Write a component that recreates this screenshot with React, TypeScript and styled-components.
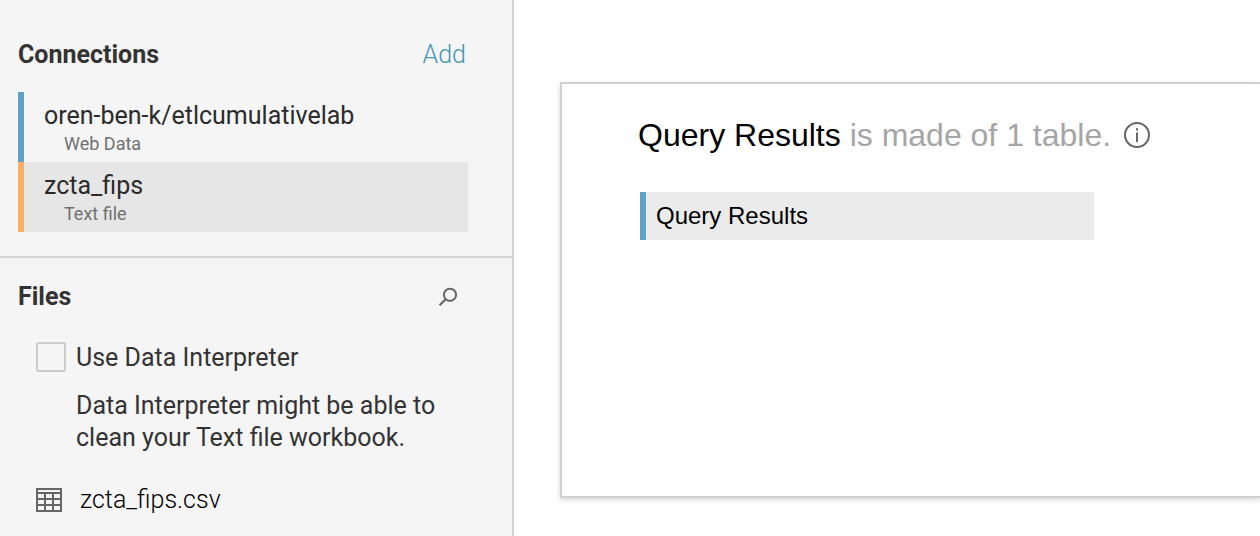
import React from "react";
import styled, { createGlobalStyle } from "styled-components";

const GlobalStyle = createGlobalStyle`
  *, *::before, *::after { box-sizing: border-box; }
  body {
    margin: 0;
    background: #fff;
    color: #333;
    font-family: Roboto, "Liberation Sans", sans-serif;
    font-size: 25px;
    font-weight: 400;
    line-height: 32px;
  }
  h1, h2, p, ul { margin: 0; padding: 0; }
  button, input { font: inherit; }
`;

const Page = styled.div`
  display: flex;
  min-height: 100vh;
`;

const Sidebar = styled.aside`
  flex: 0 0 514px;
  background: #f5f5f5;
  border-right: 2px solid #d3d3d3;
`;

const Section = styled.section<{ $divided?: boolean }>`
  padding: ${(p) => (p.$divided ? "39px 44px 24px 18px" : "23px 44px 18px 18px")};
  border-bottom: ${(p) => (p.$divided ? "2px solid #d3d3d3" : "none")};
`;

const SectionHeader = styled.header`
  display: flex;
  align-items: center;
  justify-content: space-between;
`;

const SectionTitle = styled.h2`
  font-size: 25px;
  font-weight: 700;
`;

const TextButton = styled.button`
  margin-right: 2px;
  padding: 0;
  border: 0;
  background: none;
  color: #4996b2;
  font-weight: 300;
  cursor: pointer;
`;

const IconButton = styled.button`
  display: flex;
  margin-right: 10px;
  padding: 0;
  border: 0;
  background: none;
  color: #666;
  cursor: pointer;
`;

const ConnectionList = styled.ul`
  margin-top: 21px;
  list-style: none;
`;

const Connection = styled.li<{ $color: string; $selected?: boolean }>`
  height: 70px;
  padding: 8px 20px;
  border-left: 6px solid ${(p) => p.$color};
  background: ${(p) => (p.$selected ? "#e6e6e6" : "transparent")};
`;

const ConnectionName = styled.div`
  color: #2b2b2b;
`;

const ConnectionKind = styled.div`
  padding-left: 20px;
  color: #707070;
  font-size: 18px;
  line-height: 24px;
`;

const Interpreter = styled.div`
  display: grid;
  grid-template-columns: 30px 1fr;
  column-gap: 10px;
  row-gap: 16px;
  align-items: start;
  margin: 29px 0 0 18px;
`;

const Checkbox = styled.input`
  appearance: none;
  width: 30px;
  height: 30px;
  margin: 0;
  border: 2px solid #ccc;
  border-radius: 2px;
  background: #f5f5f5;

  &:checked { background: #4996b2; }
`;

const Hint = styled.p`
  grid-column: 2;
`;

const FileRow = styled.div`
  display: flex;
  align-items: center;
  gap: 18px;
  margin: 30px 0 0 18px;
  color: #000;
  font-weight: 300;
`;

const Main = styled.main`
  display: flex;
  flex: 1;
  min-width: 0;
  padding: 82px 0 38px 46px;
`;

const Canvas = styled.section`
  flex: 1;
  min-width: 0;
  padding: 32px 76px;
  border: 2px solid #d0d0d0;
  border-right: 0;
  box-shadow: 0 2px 5px rgba(0, 0, 0, 0.16);
  font-family: "Liberation Sans", Arial, sans-serif;
  color: #000;
`;

const Summary = styled.div`
  display: flex;
  align-items: center;
  gap: 12px;
`;

const SummaryTitle = styled.h1`
  font-size: 32px;
  font-weight: 400;
  line-height: 38px;
`;

const Muted = styled.span`
  color: #a5a5a5;
`;

const TableChip = styled.div`
  max-width: 454px;
  margin: 38px 0 0 2px;
  padding: 8px 10px;
  border-left: 6px solid #5fa2c4;
  background: #ebebeb;
  font-size: 24px;
`;

const SearchIcon = () => (
  <svg width="20" height="20" viewBox="0 0 20 20" fill="none" stroke="currentColor" strokeWidth="2" aria-hidden="true">
    <circle cx="12" cy="7.8" r="6.1" />
    <path d="M7.6 12.2 1.6 18.2" strokeWidth="2.2" />
  </svg>
);

const TableIcon = () => (
  <svg width="26" height="24" viewBox="0 0 26 24" fill="none" stroke="#666" strokeWidth="2" aria-hidden="true">
    <path d="M1 1H25V23H1ZM1 5H25M1 11H25M1 17H25M9 5V23M17 5V23" />
  </svg>
);

const InfoIcon = () => (
  <svg width="28" height="28" viewBox="0 0 28 28" fill="none" stroke="currentColor" strokeWidth="2" aria-hidden="true">
    <circle cx="14" cy="14" r="12" />
    <path d="M14 11.5V21M14 7.2V9.4" />
  </svg>
);

const InfoButton = styled(IconButton)`
  margin-right: 0;
`;

const connections = [
  { name: "oren-ben-k/etlcumulativelab", kind: "Web Data", color: "#5fa2c4", selected: false },
  { name: "zcta_fips", kind: "Text file", color: "#f9b069", selected: true },
];

export default function App() {
  return (
    <>
      <GlobalStyle />
      <Page>
        <Sidebar>
          <Section $divided>
            <SectionHeader>
              <SectionTitle>Connections</SectionTitle>
              <TextButton type="button">Add</TextButton>
            </SectionHeader>
            <ConnectionList>
              {connections.map((c) => (
                <Connection key={c.name} $color={c.color} $selected={c.selected}>
                  <ConnectionName>{c.name}</ConnectionName>
                  <ConnectionKind>{c.kind}</ConnectionKind>
                </Connection>
              ))}
            </ConnectionList>
          </Section>
          <Section>
            <SectionHeader>
              <SectionTitle>Files</SectionTitle>
              <IconButton type="button" aria-label="Search files">
                <SearchIcon />
              </IconButton>
            </SectionHeader>
            <Interpreter>
              <Checkbox type="checkbox" id="interpreter" />
              <label htmlFor="interpreter">Use Data Interpreter</label>
              <Hint>Data Interpreter might be able to clean your Text file workbook.</Hint>
            </Interpreter>
            <FileRow>
              <TableIcon />
              <span>zcta_fips.csv</span>
            </FileRow>
          </Section>
        </Sidebar>
        <Main>
          <Canvas>
            <Summary>
              <SummaryTitle>
                Query Results <Muted>is made of 1 table.</Muted>
              </SummaryTitle>
              <InfoButton type="button" aria-label="About this data source">
                <InfoIcon />
              </InfoButton>
            </Summary>
            <TableChip>Query Results</TableChip>
          </Canvas>
        </Main>
      </Page>
    </>
  );
}
